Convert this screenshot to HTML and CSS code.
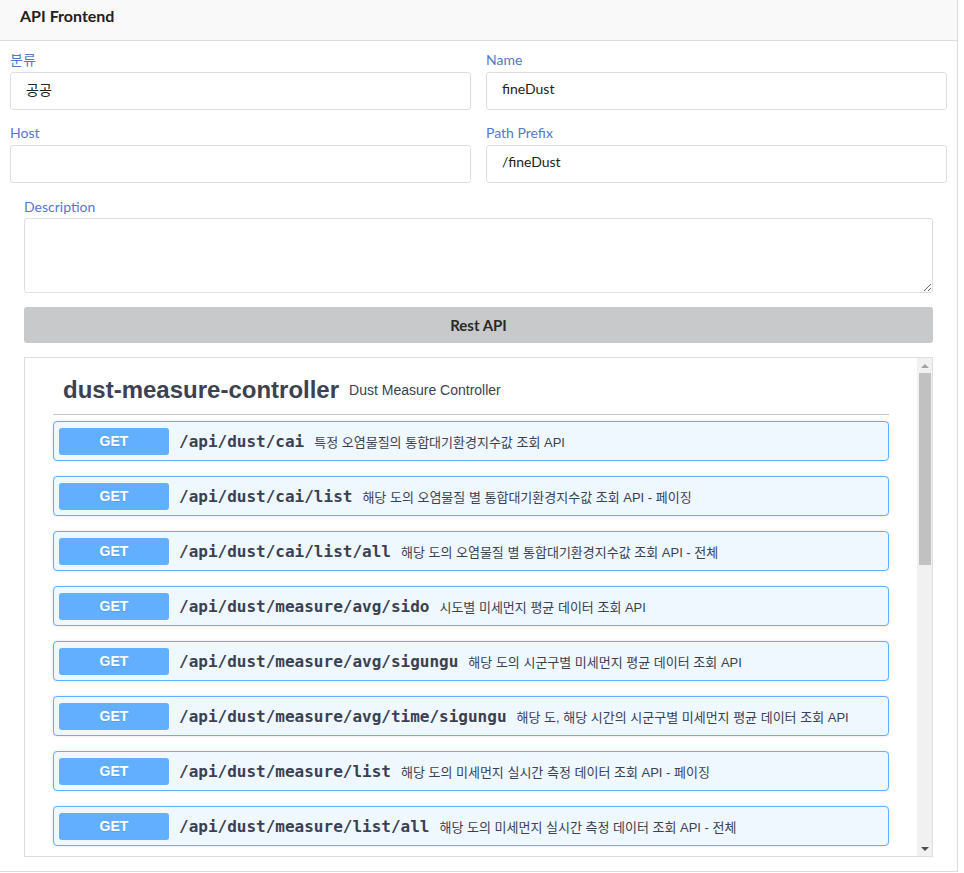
FILE: index.html
```html
<!DOCTYPE html>
<html lang="ko">
<head>
<meta charset="utf-8">
<title>API Frontend</title>
<link rel="stylesheet" href="styles.css">
</head>
<body>
<div class="card">
  <div class="card-header">API Frontend</div>
  <div class="card-body">
    <div class="grid">
      <div class="field">
        <label class="lbl">분류</label>
        <input class="inp" type="text" value="공공">
      </div>
      <div class="field">
        <label class="lbl">Name</label>
        <input class="inp" type="text" value="fineDust">
      </div>
      <div class="field">
        <label class="lbl">Host</label>
        <input class="inp" type="text" value="">
      </div>
      <div class="field">
        <label class="lbl">Path Prefix</label>
        <input class="inp" type="text" value="/fineDust">
      </div>
    </div>
    <div class="desc">
      <label class="lbl lbl-desc">Description</label>
      <textarea class="ta"></textarea>
      <button class="rest-btn" type="button">Rest API</button>
      <div class="swagger">
        <div class="wrapper">
          <h4 class="tag"><span class="tag-name">dust-measure-controller</span><small class="tag-desc">Dust Measure Controller</small></h4>
          <div class="op"><span class="method">GET</span><span class="path">/api/dust/cai</span><span class="op-desc">특정 오염물질의 통합대기환경지수값 조회 API</span></div>
          <div class="op"><span class="method">GET</span><span class="path">/api/dust/cai/list</span><span class="op-desc">해당 도의 오염물질 별 통합대기환경지수값 조회 API - 페이징</span></div>
          <div class="op"><span class="method">GET</span><span class="path">/api/dust/cai/list/all</span><span class="op-desc">해당 도의 오염물질 별 통합대기환경지수값 조회 API - 전체</span></div>
          <div class="op"><span class="method">GET</span><span class="path">/api/dust/measure/avg/sido</span><span class="op-desc">시도별 미세먼지 평균 데이터 조회 API</span></div>
          <div class="op"><span class="method">GET</span><span class="path">/api/dust/measure/avg/sigungu</span><span class="op-desc">해당 도의 시군구별 미세먼지 평균 데이터 조회 API</span></div>
          <div class="op"><span class="method">GET</span><span class="path">/api/dust/measure/avg/time/sigungu</span><span class="op-desc">해당 도, 해당 시간의 시군구별 미세먼지 평균 데이터 조회 API</span></div>
          <div class="op"><span class="method">GET</span><span class="path">/api/dust/measure/list</span><span class="op-desc">해당 도의 미세먼지 실시간 측정 데이터 조회 API - 페이징</span></div>
          <div class="op"><span class="method">GET</span><span class="path">/api/dust/measure/list/all</span><span class="op-desc">해당 도의 미세먼지 실시간 측정 데이터 조회 API - 전체</span></div>
        </div>
        <div class="sb" aria-hidden="true">
          <div class="sb-btn"><span class="arr-up"></span></div>
          <div class="sb-track"><div class="sb-thumb"></div></div>
          <div class="sb-btn"><span class="arr-down"></span></div>
        </div>
      </div>
    </div>
  </div>
</div>
</body>
</html>
```

FILE: styles.css
```css
* { box-sizing: border-box; }
html, body { margin: 0; padding: 0; background: #fff; }
body { font-family: Lato, "Noto Sans CJK KR", sans-serif; font-size: 14px; color: #333; }

.card {
  width: 958px;
  border-right: 1px solid #dcdcdc;
  border-bottom: 1px solid #dcdcdc;
}
.card-header {
  height: 41px;
  background: #f9f9f9;
  border-bottom: 1px solid #dcdcdc;
  padding: 6px 20px 0 20px;
  font-weight: 700;
  font-size: 16px;
  line-height: 20px;
  color: #222;
}
.card-body { padding: 9px 10px 14px 10px; }

.grid {
  display: grid;
  grid-template-columns: 461px 461px;
  column-gap: 15px;
  row-gap: 13px;
}
.field { display: flex; flex-direction: column; }
.lbl {
  display: block;
  color: #5578c8;
  font-size: 14px;
  line-height: 20px;
  margin-bottom: 2px;
}
.inp {
  height: 38px;
  border: 1px solid #dedede;
  border-radius: 3px;
  padding: 0 15px 5px 15px;
  font-family: Lato, "Noto Sans CJK KR", sans-serif;
  font-size: 14px;
  color: #222;
  outline: none;
}

.desc { padding: 14px 14px 0 14px; display: flex; flex-direction: column; }
.lbl-desc { margin-bottom: 1px; }
.ta {
  height: 75px;
  border: 1px solid #dedede;
  border-radius: 3px;
  font-family: Lato, sans-serif;
  outline: none;
  margin: 0;
}
.rest-btn {
  margin-top: 14px;
  height: 36px;
  border: none;
  border-radius: 3px;
  background: #c8c9cb;
  font-family: Lato, sans-serif;
  font-weight: 700;
  font-size: 15px;
  color: #2a2a2a;
}
.swagger {
  margin-top: 14px;
  height: 500px;
  border: 1px solid #dedede;
  display: flex;
  overflow: hidden;
}

/* drawn scrollbar */
.sb {
  width: 15px;
  flex: none;
  background: #f1f1f1;
  display: flex;
  flex-direction: column;
}
.sb-btn {
  height: 15px;
  flex: none;
  display: flex;
  align-items: center;
  justify-content: center;
}
.arr-up {
  width: 0; height: 0;
  border-left: 4px solid transparent;
  border-right: 4px solid transparent;
  border-bottom: 4px solid #a3a3a3;
}
.arr-down {
  width: 0; height: 0;
  border-left: 4px solid transparent;
  border-right: 4px solid transparent;
  border-top: 4px solid #505050;
}
.sb-track { flex: 1; }
.sb-thumb {
  height: 192px;
  margin: 0 1px 0 2px;
  background: #c1c1c1;
}

.wrapper {
  flex: 1;
  min-width: 0;
  padding: 8px 28px 10px 28px;
  font-family: "Liberation Sans", Arial, "Noto Sans CJK KR", sans-serif;
  color: #3b4151;
}
.tag {
  display: flex;
  align-items: center;
  margin: 0 0 6px 0;
  padding: 10px 20px 10px 10px;
  border-bottom: 1px solid rgba(59,65,81,.3);
  font-size: 24px;
  font-weight: 700;
  color: #3b4151;
}
.tag-desc {
  font-size: 14px;
  font-weight: 400;
  padding: 0 10px;
  flex: 1;
}
.op {
  display: flex;
  align-items: center;
  height: 40px;
  margin-bottom: 15px;
  border: 1px solid #61affe;
  border-radius: 4px;
  background: #eff7ff;
  padding: 0 5px;
  box-shadow: 0 0 3px rgba(0,0,0,.12);
}
.method {
  width: 110px;
  height: 27px;
  flex: none;
  background: #61affe;
  border-radius: 3px;
  color: #fff;
  font-weight: 700;
  font-size: 14px;
  display: flex;
  align-items: center;
  justify-content: center;
  text-shadow: 0 1px 0 rgba(0,0,0,.1);
}
.path {
  padding: 0 10px;
  font-family: "DejaVu Sans Mono", monospace;
  font-weight: 700;
  font-size: 16px;
  color: #3b4151;
}
.op-desc {
  font-size: 13px;
  color: #3b4151;
  flex: 1;
}
```
